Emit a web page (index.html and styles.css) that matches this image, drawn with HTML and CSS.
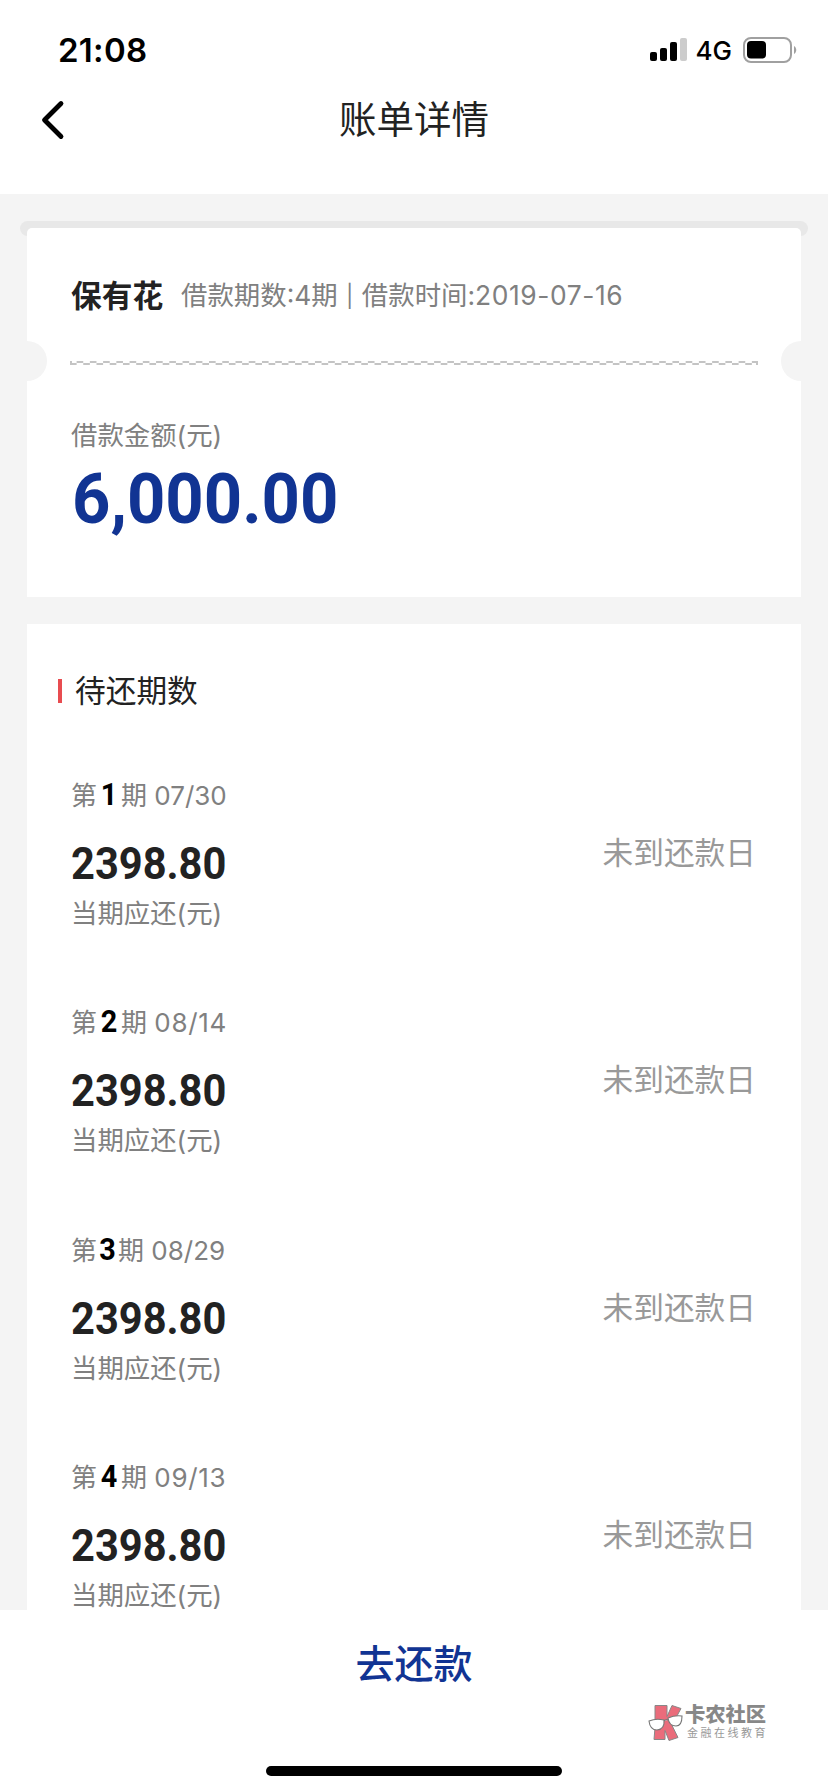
FILE: index.html
```html
<!DOCTYPE html>
<html lang="zh-CN">
<head>
<meta charset="utf-8">
<title>账单详情</title>
<link rel="stylesheet" href="styles.css">
</head>
<body>
<div class="screen">
  <header class="header">
    <div class="status-bar">
      <span class="clock">21:08</span>
      <div class="indicators">
        <svg class="signal" width="37" height="24" viewBox="0 0 37 24">
          <rect x="0" y="14" width="7" height="9" rx="2"/>
          <rect x="10" y="10" width="7" height="13" rx="2"/>
          <rect x="20" y="4" width="7" height="19" rx="2"/>
          <rect x="30" y="0" width="7" height="23" rx="2" fill="#ccc"/>
        </svg>
        <span class="network">4G</span>
        <svg class="battery" width="54" height="26" viewBox="0 0 54 26">
          <rect x="1" y="1" width="47" height="24" rx="7" fill="none" stroke="#a0a0a0" stroke-width="2"/>
          <rect x="4" y="4" width="19" height="17.500" rx="4"/>
          <path d="M51 9c3 2 3 6 0 8z" fill="#a0a0a0"/>
        </svg>
      </div>
    </div>
    <nav class="nav">
      <svg class="back" width="24" height="40" viewBox="0 0 24 40">
        <path d="M20 3.500L3.500 20L20 36.500" fill="none" stroke="#000" stroke-width="4.800" stroke-linecap="round" stroke-linejoin="round"/>
      </svg>
      <h1 class="title">账单详情</h1>
    </nav>
  </header>

  <main class="content">
    <div class="slot"></div>
    <section class="ticket">
      <div class="loan">
        <strong class="loan-name">保有花</strong>
        <span class="loan-meta">借款期数:4期 <span class="divider">|</span> 借款时间:<span class="loan-date">2019-07-16</span></span>
      </div>
      <div class="tear">
        <span class="notch notch-left"></span>
        <svg class="perforation" width="688" height="4" viewBox="0 0 688 4">
          <path d="M0 3H688" stroke-dasharray="6.620 6.620"/>
          <path d="M6.620 1H688" stroke-dasharray="6.620 6.620"/>
          <path d="M1 0V4M687 0V4"/>
        </svg>
        <span class="notch notch-right"></span>
      </div>
      <div class="loan-label">借款金额(元)</div>
      <div class="loan-amount">6,000.00</div>
    </section>

    <section class="plan">
      <h2 class="plan-title"><span>待还期数</span></h2>
      <div class="period">
        <div class="period-info">
          <div class="period-date">第<b class="period-no">1</b>期 07/30</div>
          <div class="period-amount">2398.80</div>
          <div class="period-label">当期应还(元)</div>
        </div>
        <div class="period-state">未到还款日</div>
      </div>
      <div class="period">
        <div class="period-info">
          <div class="period-date">第<b class="period-no">2</b>期 <span class="wide">08/14</span></div>
          <div class="period-amount">2398.80</div>
          <div class="period-label">当期应还(元)</div>
        </div>
        <div class="period-state">未到还款日</div>
      </div>
      <div class="period">
        <div class="period-info">
          <div class="period-date">第<b class="period-no narrow">3</b>期 08/29</div>
          <div class="period-amount">2398.80</div>
          <div class="period-label">当期应还(元)</div>
        </div>
        <div class="period-state">未到还款日</div>
      </div>
      <div class="period">
        <div class="period-info">
          <div class="period-date">第<b class="period-no">4</b>期 <span class="wide">09/13</span></div>
          <div class="period-amount">2398.80</div>
          <div class="period-label">当期应还(元)</div>
        </div>
        <div class="period-state">未到还款日</div>
      </div>
    </section>
  </main>

  <footer class="footer">
    <button class="repay">去还款</button>
    <div class="community">
      <svg class="community-logo" width="36" height="38" viewBox="0 0 36 38">
        <path d="M7 1.500h12l0 11 5-11 9 3-6 11-3 6 6 12-9 3-4-10 0 9H6l1-12z" fill="#ea6c7b" stroke="#888" stroke-width="1"/>
        <path d="M1 17q7-3 15-1 1 9-7 10-7 0-8-9zM20 14q7-3 14-2 0 10-6 10-7 0-8-8zM16 17q2-2 4-1" fill="#fff" stroke="#777" stroke-width="1.100"/>
      </svg>
      <div class="community-text">
        <div class="community-name">卡农社区</div>
        <div class="community-sub">金融在线教育</div>
      </div>
    </div>
    <div class="home-indicator"></div>
  </footer>
</div>
</body>
</html>
```
FILE: styles.css
```css
* { box-sizing: border-box; }
body {
  margin: 0;
  font-family: Inter, "Noto Sans CJK SC", sans-serif;
  background: #fff;
}
.screen {
  width: 828px;
  height: 1792px;
  display: flex;
  flex-direction: column;
  overflow: hidden;
}
.header { height: 194px; flex: none; background: #fff; }
.status-bar {
  height: 88px;
  padding: 12px 31px 0 58px;
  display: flex;
  align-items: center;
  justify-content: space-between;
}
.clock { font-size: 33px; font-weight: 600; line-height: 40px; letter-spacing: 0.300px; }
.indicators { display: flex; align-items: center; }
.network { font-size: 26px; font-weight: 500; line-height: 32px; margin: 1px 11px 0 9px; }
.nav {
  height: 64px;
  display: grid;
  grid-template-columns: 100px 1fr 100px;
  align-items: center;
}
.back { margin-left: 41px; }
.title {
  margin: 0;
  text-align: center;
  font-size: 37.500px;
  font-weight: 400;
  line-height: 50px;
  color: #222;
}
.content {
  flex: none;
  height: 1416px;
  padding: 27px 27px 0;
  overflow: hidden;
  background: #f4f4f4;
}
.slot {
  height: 15px;
  margin: 0 -7px -8px;
  border-radius: 8px;
  background: #e8e8e8;
}
.ticket {
  position: relative;
  height: 369px;
  padding: 40px 43px 0;
  border-radius: 5px 5px 0 0;
  background: #fff;
}
.loan { display: flex; align-items: center; height: 50px; white-space: nowrap; }
.loan-name { font-size: 30.700px; font-weight: 700; color: #222; margin: 0 18px 0 1px; }
.loan-meta { font-size: 26.400px; color: #808080; }
.divider { margin: 0 1px; font-size: 22px; vertical-align: 1px; }
.loan-date { letter-spacing: 0.600px; }
.tear {
  display: flex;
  align-items: center;
  justify-content: space-between;
  height: 40px;
  margin: 23px -43px 0;
}
.notch { width: 20px; height: 40px; background: #f4f4f4; }
.notch-left { border-radius: 0 20px 20px 0; }
.notch-right { border-radius: 20px 0 0 20px; }
.perforation { margin-top: 4px; fill: none; stroke: #c4c4c4; stroke-width: 2; }
.loan-label { margin: 34px 0 0 1px; font-size: 26.400px; line-height: 40px; color: #808080; }
.loan-amount {
  width: max-content;
  margin: 4px 0 0 2px;
  font-family: Roboto, sans-serif;
  font-size: 71px;
  font-weight: 700;
  line-height: 80px;
  transform: scaleX(0.943);
  transform-origin: left;
  color: #113493;
}
.plan { height: 1100px; margin-top: 27px; padding: 45px 43px 0; background: #fff; }
.plan-title {
  display: flex;
  align-items: center;
  gap: 13px;
  margin: 0 0 58px -12px;
  height: 44px;
  font-size: 30.700px;
  font-weight: 400;
  color: #222;
}
.plan-title span { margin-top: -5px; }
.plan-title::before { content: ""; width: 4px; height: 24px; background: #e84c50; }
.period {
  height: 227.300px;
  display: flex;
  justify-content: space-between;
}
.period-date {
  height: 50px;
  margin-left: 1px;
  font-size: 26px;
  line-height: 49px;
  color: #808080;
  white-space: nowrap;
}
.wide { letter-spacing: 0.700px; }
.period-no {
  display: inline-block;
  width: 24px;
  text-align: center;
  font-family: Roboto, sans-serif;
  font-size: 31px;
  line-height: 40px;
  transform: scaleX(0.93);
  color: #000;
}
.narrow { width: 21px; }
.period-amount {
  width: max-content;
  height: 50px;
  margin: 18px 0 0 1px;
  font-family: Roboto, sans-serif;
  font-size: 45px;
  font-weight: 700;
  line-height: 50px;
  transform: scaleX(0.925);
  transform-origin: left;
  color: #222;
}
.period-label { margin: 4px 0 0 1px; font-size: 26.400px; line-height: 40px; color: #808080; }
.period-state { margin: 60px 2px 0 0; font-size: 30.700px; line-height: 44px; color: #999; }
.footer {
  flex: 1;
  display: flex;
  flex-direction: column;
  background: #fff;
}
.repay {
  height: 90px;
  padding: 12px 0 0;
  border: 0;
  background: none;
  font-family: "Noto Sans CJK SC", sans-serif;
  font-size: 39px;
  font-weight: 500;
  color: #113493;
}
.community { display: flex; gap: 1px; margin: 4px 0 0 648px; height: 40px; }
.community-name { font-size: 20.300px; font-weight: 900; line-height: 22px; color: #888; }
.community-sub { margin-left: 2px; font-size: 11px; line-height: 14px; letter-spacing: 2.500px; color: #999; white-space: nowrap; }
.home-indicator { width: 296px; height: 10px; margin: 22px auto 0; border-radius: 5px; background: #000; }
```
